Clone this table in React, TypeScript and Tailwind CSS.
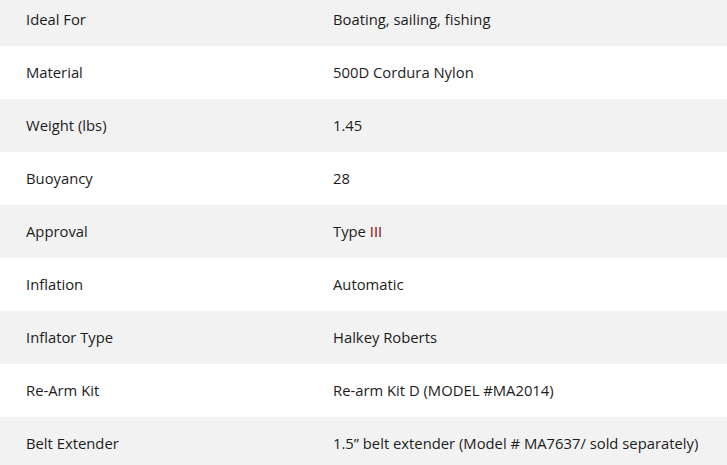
// Product spec table: alternating grey rows, label / value columns.

const SPECS: Array<{ label: string; value: React.ReactNode }> = [
  { label: "Ideal For", value: "Boating, sailing, fishing" },
  { label: "Material", value: "500D Cordura Nylon" },
  { label: "Weight (lbs)", value: "1.45" },
  { label: "Buoyancy", value: "28" },
  {
    label: "Approval",
    value: (
      <>
        Type <span className="text-[#990000]">III</span>
      </>
    ),
  },
  { label: "Inflation", value: "Automatic" },
  { label: "Inflator Type", value: "Halkey Roberts" },
  { label: "Re-Arm Kit", value: "Re-arm Kit D (MODEL #MA2014)" },
  {
    label: "Belt Extender",
    value: "1.5” belt extender (Model # MA7637/ sold separately)",
  },
];

export default function App() {
  return (
    <div className="w-[727px] h-[465px] overflow-hidden bg-white">
      <div className="-mt-[7px] font-['Open_Sans',sans-serif] text-[14.8px] text-[#1c1c1c]">
        {SPECS.map((s, i) => (
          <div
            key={s.label}
            className={`grid grid-cols-[333px_1fr] h-[53px] items-center ${
              i % 2 === 0 ? "bg-[#f2f2f2]" : "bg-white"
            }`}
          >
            <div className="pl-[26px]">{s.label}</div>
            <div>{s.value}</div>
          </div>
        ))}
      </div>
    </div>
  );
}
